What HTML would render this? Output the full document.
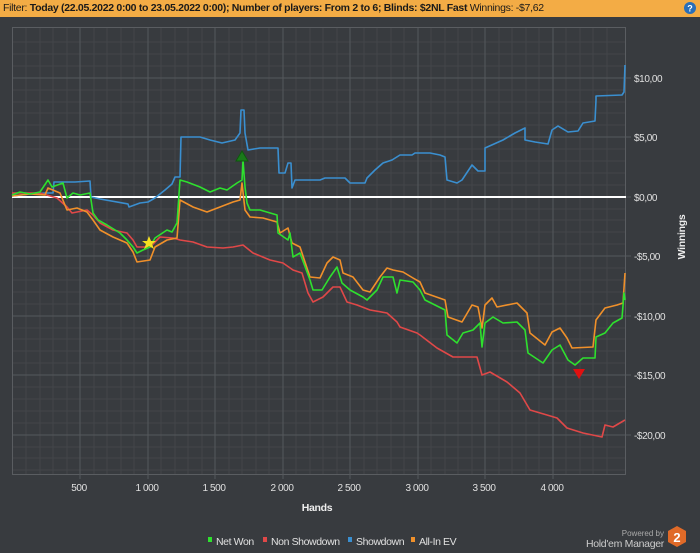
<!DOCTYPE html>
<html><head><meta charset="utf-8"><style>
body{margin:0;width:700px;height:553px;background:#383b3f;overflow:hidden;font-family:"Liberation Sans",sans-serif;}
.bar{position:absolute;left:0;top:0;width:700px;height:17px;background:#f3ac45;font-size:10.5px;line-height:17px;color:#1a1a1a;}
.bar span{position:absolute;left:3px;top:0;letter-spacing:-0.3px;white-space:nowrap}
</style></head><body>
<div class="bar"><span>Filter: <b>Today (22.05.2022 0:00 to 23.05.2022 0:00); Number of players: From 2 to 6; Blinds: $2NL Fast</b> Winnings: -$7,62</span></div>
<svg width="700" height="553" style="position:absolute;left:0;top:0" xmlns="http://www.w3.org/2000/svg">
<circle cx="690" cy="8" r="6" fill="#2a6fb8"/><text x="690" y="11.5" font-size="9" fill="#fff" text-anchor="middle" font-weight="bold" font-family="Liberation Sans">?</text>
<g stroke="#43464a" stroke-width="1">
<path d="M26 27V474M40 27V474M53 27V474M67 27V474M94 27V474M107 27V474M121 27V474M134 27V474M161 27V474M175 27V474M188 27V474M202 27V474M229 27V474M242 27V474M256 27V474M269 27V474M296 27V474M310 27V474M323 27V474M337 27V474M364 27V474M377 27V474M391 27V474M404 27V474M431 27V474M445 27V474M458 27V474M472 27V474M499 27V474M512 27V474M526 27V474M539 27V474M566 27V474M580 27V474M593 27V474M607 27V474"/>
<path d="M12 42H626M12 54H626M12 66H626M12 90H626M12 102H626M12 113H626M12 125H626M12 149H626M12 161H626M12 173H626M12 185H626M12 209H626M12 220H626M12 232H626M12 244H626M12 268H626M12 280H626M12 292H626M12 304H626M12 328H626M12 339H626M12 351H626M12 363H626M12 387H626M12 399H626M12 411H626M12 423H626M12 447H626M12 458H626M12 470H626"/>
</g>
<g stroke="#55585c" stroke-width="1">
<path d="M80 27V474M148 27V474M215 27V474M283 27V474M350 27V474M418 27V474M485 27V474M553 27V474"/>
<path d="M12 78H626M12 137H626M12 256H626M12 316H626M12 375H626M12 435H626"/>
<rect x="12.5" y="27.5" width="613" height="447" fill="none" stroke="#5a5d61"/>
<path d="M80 474v5M148 474v5M215 474v5M283 474v5M350 474v5M418 474v5M485 474v5M553 474v5M626 78h5M626 137h5M626 197h5M626 256h5M626 316h5M626 375h5M626 435h5"/>
</g>
<line x1="12" y1="197" x2="626" y2="197" stroke="#fff" stroke-width="2"/>
<g fill="none" stroke-width="1.6" stroke-linejoin="round">
<polyline stroke="#3a8fd0" points="12,196 30,194 45,193 53,193 54,182 75,182 90,181 91,197 100,199 128,204 129,207 140,203 148,202 155,198 165,190 172,184 175,177 180,177 181,137 200,137 210,140 222,143 235,140 240,133 241,110 244,110 245,133 248,150 260,148 278,148 279,173 285,173 288,163 291,163 292,188 295,180 320,180 325,178 345,178 350,183 365,183 367,178 375,170 383,163 392,160 400,155 412,155 415,153 430,153 440,155 445,157 447,180 457,183 462,180 472,165 478,171 485,171 485,148 503,140 515,133 525,128 525,140 535,142 548,144 552,130 558,126 568,132 578,131 583,123 595,121 596,100 596,96 622,95 624,92 625,65"/>
<polyline stroke="#e04848" points="12,193 40,193 57,198 67,207 72,213 87,210 93,215 100,223 113,230 127,233 133,240 137,247 150,247 160,237 173,238 180,240 193,242 207,247 223,248 233,247 243,245 253,253 270,260 283,263 293,270 302,273 308,293 313,302 323,297 333,287 340,287 347,302 357,305 370,310 387,313 397,322 400,327 417,333 420,335 437,348 453,357 477,357 482,375 490,372 507,382 520,393 530,410 547,415 557,418 567,428 583,433 602,437 605,425 613,427 625,420"/>
<polyline stroke="#f0902a" points="12,196 30,194 45,195 48,188 60,193 67,210 77,208 87,212 93,220 100,230 113,237 127,243 133,252 137,262 150,260 155,247 167,240 177,238 180,200 193,207 207,212 220,207 233,202 240,200 242,183 245,210 250,217 263,218 277,222 280,233 288,228 292,243 300,247 310,277 320,278 327,263 333,257 340,260 343,273 353,277 363,290 370,292 380,277 387,268 393,270 403,272 413,278 420,282 425,293 445,300 448,317 462,322 472,305 478,307 482,328 485,305 492,298 497,307 517,303 527,313 530,333 545,345 552,332 560,328 567,338 572,348 593,347 596,320 605,308 617,305 623,303 625,273"/>
<polyline stroke="#2ee02e" points="12,195 20,192 30,194 40,192 48,180 52,187 63,183 67,198 73,193 80,195 90,193 93,213 98,220 107,225 120,233 127,240 133,247 137,253 143,250 150,247 155,238 167,230 172,232 177,223 180,180 187,182 200,187 210,192 220,188 227,190 237,183 242,180 243,160 245,187 247,203 250,210 260,210 277,215 278,233 288,240 290,233 293,257 300,253 310,280 313,290 322,290 330,277 337,267 342,283 350,290 363,297 367,300 377,290 383,277 393,277 397,293 400,280 413,282 420,290 425,300 445,310 447,335 457,343 463,333 473,330 480,323 482,347 485,323 493,317 503,323 517,322 525,330 528,353 543,363 552,350 560,345 568,360 575,365 583,358 595,358 596,337 605,333 613,323 622,318 624,293 625,300"/>
</g>
<polygon points="242,151 236,161 248,161" fill="#1a7a1a" stroke="#0d5a0d"/>
<polygon points="573,369 585,369 579,379" fill="#e01010"/>
<polygon points="149,236 151,241 156,241 152,244 154,249 149,246 144,249 146,244 142,241 147,241" fill="#f5e020"/>
<g font-family="Liberation Sans" font-size="10" fill="#e0e0e0" text-anchor="middle" letter-spacing="-0.4">
<text x="79" y="491">500</text><text x="147" y="491">1 000</text><text x="214" y="491">1 500</text><text x="282" y="491">2 000</text><text x="349" y="491">2 500</text><text x="417" y="491">3 000</text><text x="484" y="491">3 500</text><text x="552" y="491">4 000</text>
</g>
<g font-family="Liberation Sans" font-size="10" fill="#e0e0e0" letter-spacing="-0.4">
<text x="634" y="82">$10,00</text><text x="634" y="141">$5,00</text><text x="634" y="201">$0,00</text><text x="634" y="260">-$5,00</text><text x="634" y="320">-$10,00</text><text x="634" y="379">-$15,00</text><text x="634" y="439">-$20,00</text>
</g>
<text x="317" y="511" font-family="Liberation Sans" font-size="10.5" font-weight="bold" fill="#eee" text-anchor="middle" letter-spacing="-0.3">Hands</text>
<text transform="translate(685,237) rotate(-90)" font-family="Liberation Sans" font-size="10.5" font-weight="bold" fill="#eee" text-anchor="middle" letter-spacing="-0.3">Winnings</text>
<g font-family="Liberation Sans" font-size="10.5" fill="#e0e0e0" letter-spacing="-0.4">
<rect x="208" y="537" width="4" height="5" fill="#2ee02e"/><text x="216" y="545">Net Won</text>
<rect x="263" y="537" width="4" height="5" fill="#e04848"/><text x="271" y="545">Non Showdown</text>
<rect x="348" y="537" width="4" height="5" fill="#3a8fd0"/><text x="356" y="545">Showdown</text>
<rect x="411" y="537" width="4" height="5" fill="#f0902a"/><text x="419" y="545">All-In EV</text>
</g>
<text x="664" y="536" font-family="Liberation Sans" font-size="8" fill="#aaa" text-anchor="end">Powered by</text>
<text x="664" y="547" font-family="Liberation Sans" font-size="10.5" fill="#ccc" text-anchor="end" letter-spacing="-0.3">Hold'em Manager</text>
<polygon points="677,526 686,531 686,542 677,547 668,542 668,531" fill="#e06a28"/>
<text x="677" y="542" font-family="Liberation Sans" font-size="13" font-weight="bold" fill="#fff" text-anchor="middle">2</text>
</svg>
</body></html>
